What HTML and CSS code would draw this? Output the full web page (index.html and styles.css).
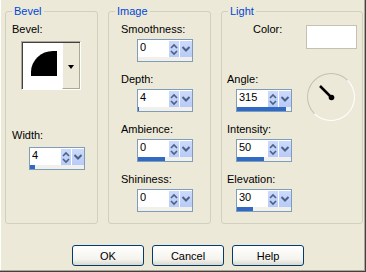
FILE: index.html
```html
<html>
<head>
    <meta charset="UTF-8">
    <title>Inner Bevel</title>
    <link rel="stylesheet" href="styles.css">
</head>

<body>
    <div class="dialog">
        <div class="groups">
            <fieldset class="group group-bevel">
                <legend>Bevel</legend>
                <div class="label">Bevel:</div>
                <div class="bevel-pick">
                    <div class="bevel-img"><div class="bevel-shape"></div></div>
                    <div class="bevel-drop"><span class="tri"></span></div>
                </div>
                <div class="label label-width">Width:</div>
                <div class="spin spin-width">
                    <div class="spin-row">
                        <span class="spin-val">4</span>
                        <span class="spin-btn spin-ud"><svg width="10" height="16"><path d="M2 7 L5 4 L8 7 M2 10 L5 13 L8 10"/></svg></span>
                        <span class="spin-btn spin-dd"><svg width="12" height="16"><path d="M2.5 6 L6 9.5 L9.5 6"/></svg></span>
                    </div>
                    <div class="spin-bar"><div class="spin-fill" style="width:5px"></div></div>
                </div>
            </fieldset>

            <fieldset class="group group-image">
                <legend>Image</legend>
                <div class="label">Smoothness:</div>
                <div class="spin">
                    <div class="spin-row">
                        <span class="spin-val">0</span>
                        <span class="spin-btn spin-ud"><svg width="10" height="16"><path d="M2 7 L5 4 L8 7 M2 10 L5 13 L8 10"/></svg></span>
                        <span class="spin-btn spin-dd"><svg width="12" height="16"><path d="M2.5 6 L6 9.5 L9.5 6"/></svg></span>
                    </div>
                    <div class="spin-bar"><div class="spin-fill" style="width:0px"></div></div>
                </div>
                <div class="label next">Depth:</div>
                <div class="spin">
                    <div class="spin-row">
                        <span class="spin-val">4</span>
                        <span class="spin-btn spin-ud"><svg width="10" height="16"><path d="M2 7 L5 4 L8 7 M2 10 L5 13 L8 10"/></svg></span>
                        <span class="spin-btn spin-dd"><svg width="12" height="16"><path d="M2.5 6 L6 9.5 L9.5 6"/></svg></span>
                    </div>
                    <div class="spin-bar"><div class="spin-fill" style="width:1px"></div></div>
                </div>
                <div class="label next">Ambience:</div>
                <div class="spin">
                    <div class="spin-row">
                        <span class="spin-val">0</span>
                        <span class="spin-btn spin-ud"><svg width="10" height="16"><path d="M2 7 L5 4 L8 7 M2 10 L5 13 L8 10"/></svg></span>
                        <span class="spin-btn spin-dd"><svg width="12" height="16"><path d="M2.5 6 L6 9.5 L9.5 6"/></svg></span>
                    </div>
                    <div class="spin-bar"><div class="spin-fill" style="width:27px"></div></div>
                </div>
                <div class="label next">Shininess:</div>
                <div class="spin">
                    <div class="spin-row">
                        <span class="spin-val">0</span>
                        <span class="spin-btn spin-ud"><svg width="10" height="16"><path d="M2 7 L5 4 L8 7 M2 10 L5 13 L8 10"/></svg></span>
                        <span class="spin-btn spin-dd"><svg width="12" height="16"><path d="M2.5 6 L6 9.5 L9.5 6"/></svg></span>
                    </div>
                    <div class="spin-bar"><div class="spin-fill" style="width:0px"></div></div>
                </div>
            </fieldset>

            <fieldset class="group group-light">
                <legend>Light</legend>
                <div class="color-row">
                    <div class="label color-label">Color:</div>
                    <div class="swatch"></div>
                </div>
                <div class="angle-row">
                    <div class="angle-col">
                        <div class="label">Angle:</div>
                        <div class="spin">
                            <div class="spin-row">
                                <span class="spin-val">315</span>
                                <span class="spin-btn spin-ud"><svg width="10" height="16"><path d="M2 7 L5 4 L8 7 M2 10 L5 13 L8 10"/></svg></span>
                                <span class="spin-btn spin-dd"><svg width="12" height="16"><path d="M2.5 6 L6 9.5 L9.5 6"/></svg></span>
                            </div>
                            <div class="spin-bar"><div class="spin-fill" style="width:49px"></div></div>
                        </div>
                    </div>
                    <div class="dial">
                        <svg width="46" height="46">
                            <line x1="12" y1="12" x2="23.5" y2="23.5" stroke="#000" stroke-width="2.5"/>
                            <circle cx="23.5" cy="23.5" r="2.8" fill="#000"/>
                        </svg>
                    </div>
                </div>
                <div class="label after-dial">Intensity:</div>
                <div class="spin">
                    <div class="spin-row">
                        <span class="spin-val">50</span>
                        <span class="spin-btn spin-ud"><svg width="10" height="16"><path d="M2 7 L5 4 L8 7 M2 10 L5 13 L8 10"/></svg></span>
                        <span class="spin-btn spin-dd"><svg width="12" height="16"><path d="M2.5 6 L6 9.5 L9.5 6"/></svg></span>
                    </div>
                    <div class="spin-bar"><div class="spin-fill" style="width:27px"></div></div>
                </div>
                <div class="label next">Elevation:</div>
                <div class="spin">
                    <div class="spin-row">
                        <span class="spin-val">30</span>
                        <span class="spin-btn spin-ud"><svg width="10" height="16"><path d="M2 7 L5 4 L8 7 M2 10 L5 13 L8 10"/></svg></span>
                        <span class="spin-btn spin-dd"><svg width="12" height="16"><path d="M2.5 6 L6 9.5 L9.5 6"/></svg></span>
                    </div>
                    <div class="spin-bar"><div class="spin-fill" style="width:16px"></div></div>
                </div>
            </fieldset>
        </div>

        <div class="buttons">
            <button>OK</button>
            <button>Cancel</button>
            <button>Help</button>
        </div>
    </div>
</body>
</html>
```

FILE: styles.css
```css
body {
    margin: 0;
    background: #ECE9D8;
    color: #000;
    font-family: "Liberation Sans", Arial, sans-serif;
    font-size: 11px;
    line-height: 13px;
}
.dialog {
    width: 366px;
    height: 272px;
    box-sizing: border-box;
    padding: 5px 3px 0 5px;
    background: #ECE9D8;
    box-shadow: inset -1px -1px 0 #404040, inset -2px -2px 0 #ACA899, inset 1px 0 0 #fff;
}
.groups {
    display: flex;
    gap: 10px;
}
.group {
    margin: 0;
    padding: 0;
    min-width: 0;
    height: 219px;
    box-sizing: border-box;
    border: 1px solid #D0D0BF;
    border-radius: 3px;
}
.group legend {
    margin-left: 6px;
    padding: 0 2px;
    color: #0046D5;
    line-height: 13px;
}
.group-bevel { width: 93px; }
.group-image { width: 103px; }
.group-light { width: 142px; }

.label {
    margin-top: 5px;
}
.group-bevel .label { margin-left: 6px; }
.group-image .label { margin-left: 12px; }
.group-light .label { margin-left: 5px; }
.label.next { margin-top: 11px; }

/* bevel picker */
.bevel-pick {
    display: flex;
    width: 60px;
    height: 49px;
    box-sizing: border-box;
    margin: 5px 0 0 15px;
    border: 1px solid;
    border-color: #ACA899 #fff #fff #ACA899;
    box-shadow: inset 1px 1px 0 #404040;
    background: #fff;
}
.bevel-img {
    flex: 1;
    padding: 9px 0 0 9px;
}
.bevel-shape {
    width: 26px;
    height: 25px;
    background: #000;
    border-top-left-radius: 22px 21px;
}
.bevel-drop {
    width: 16px;
    margin: 1px 0 0 0;
    display: flex;
    align-items: center;
    justify-content: center;
    background: #ECE9D8;
    border-left: 1px solid #fff;
    border-right: 1px solid #ACA899;
    border-bottom: 1px solid #ACA899;
}
.tri {
    width: 0;
    height: 0;
    border-left: 3.5px solid transparent;
    border-right: 3.5px solid transparent;
    border-top: 4px solid #000;
    margin-top: 2px;
}
.group-bevel .label-width { margin-top: 39px; }

/* spin edit */
.spin {
    width: 56px;
    height: 23px;
    box-sizing: border-box;
    margin: 3px 0 0 28px;
    border: 1px solid #7F9DB9;
    background: #fff;
}
.spin-width { margin: 5px 0 0 23px; }
.group-light .spin { margin-left: 14px; }
.spin-row {
    display: flex;
    height: 17px;
}
.spin-val {
    flex: 1;
    padding: 1px 0 0 2px;
}
.spin-btn {
    display: flex;
    align-items: center;
    justify-content: center;
    margin-top: 1px;
    height: 16px;
    background: linear-gradient(#CCDAFC, #B8CBF7);
}
.spin-ud { width: 10px; }
.spin-dd { width: 12px; margin-left: 1px; }
.spin-btn svg path {
    fill: none;
    stroke: #4D6185;
    stroke-width: 1.6;
}
.spin-dd svg path { stroke-width: 2; }
.spin-bar {
    height: 4px;
    background: #F1F0EA;
}
.spin-fill {
    height: 4px;
    background: #316AC5;
}

/* light */
.color-row {
    display: flex;
    align-items: flex-start;
    margin-top: 5px;
}
.group-light .color-label {
    margin: 0 0 0 31px;
}
.swatch {
    width: 51px;
    height: 24px;
    box-sizing: border-box;
    margin: 2px 5px 0 auto;
    background: #fff;
    border: 1px solid #C4C1B2;
}
.angle-row {
    display: flex;
    align-items: flex-start;
    margin-top: 24px;
}
.angle-col .label { margin-top: 0; }
.dial {
    width: 48px;
    height: 48px;
    box-sizing: border-box;
    margin: 0 7px 0 auto;
    border-radius: 50%;
    border: 1px solid;
    border-color: #C4C1B2 #fff #fff #C4C1B2;
}
.dial svg { display: block; }
.group-light .after-dial { margin-top: 2px; }

/* buttons */
.buttons {
    display: flex;
    gap: 8px;
    margin-top: 21px;
    padding-left: 67px;
}
.buttons button {
    width: 72px;
    height: 21px;
    padding: 0;
    border: 1px solid #003C74;
    border-radius: 3px;
    background: linear-gradient(#FFFFFF, #F4F3EE 70%, #DCD8CC);
    font-family: "Liberation Sans", Arial, sans-serif;
    font-size: 11px;
    color: #000;
}
```
